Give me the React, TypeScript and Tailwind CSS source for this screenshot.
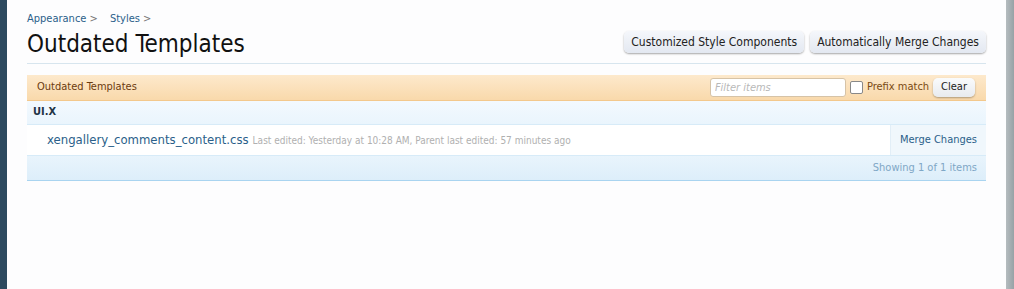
import React from 'react';

const font = { fontFamily: '"DejaVu Sans Condensed", "DejaVu Sans", sans-serif' };

export default function App() {
    return (
        <div className="flex h-[289px] w-full bg-[#fdfdfe]" style={font}>
            <div className="w-[7px] shrink-0 bg-[#2d4a5f]"></div>
            <div className="flex-1 px-5 pt-[11px]">
                <div className="flex gap-3 text-[11px] text-[#2b5f8a]">
                    <span>Appearance <span className="text-[#777]">&gt;</span></span>
                    <span>Styles <span className="text-[#777]">&gt;</span></span>
                </div>
                <div className="mt-[1.5px] flex items-end justify-between border-b border-[#d7e5ee] pb-[4px]">
                    <h1 className="text-[24px] leading-[30px] text-[#111]">Outdated Templates</h1>
                    <div className="mb-[6px] flex gap-[6px]">
                        <button className="h-[22px] rounded-[5px] bg-gradient-to-b from-[#f5f7fb] to-[#e3e8f1] px-[7px] text-[12px] text-[#222] shadow-[0_1px_2px_rgba(0,0,0,0.35)]">Customized Style Components</button>
                        <button className="h-[22px] rounded-[5px] bg-gradient-to-b from-[#f5f7fb] to-[#e3e8f1] px-[7px] text-[12px] text-[#222] shadow-[0_1px_2px_rgba(0,0,0,0.35)]">Automatically Merge Changes</button>
                    </div>
                </div>
                <div className="mt-[11px]">
                    <div className="flex h-[26px] items-center justify-between border-b border-[#f3c88c] bg-gradient-to-b from-[#fde9cc] to-[#f9d9ab] pl-[10px] pr-[11px]">
                        <span className="text-[11px] text-[#6b3b0f]">Outdated Templates</span>
                        <div className="flex items-center">
                            <input className="h-[19px] w-[136px] rounded-[3px] border border-[#d6c3a7] bg-white px-[4px] text-[11px] italic placeholder-[#b8b8b8] outline-none" placeholder="Filter items" />
                            <span className="ml-[4px] h-[13px] w-[13px] rounded-[2px] border border-[#888] bg-white"></span>
                            <span className="ml-[4px] text-[11px] text-[#7a4a13]">Prefix match</span>
                            <button className="ml-[4px] h-[19px] rounded-[5px] bg-gradient-to-b from-[#fafbfc] to-[#e8ebef] px-[8px] text-[11px] text-[#222] shadow-[0_1px_2px_rgba(0,0,0,0.3)]">Clear</button>
                        </div>
                    </div>
                    <div className="flex h-[24px] items-center border-b border-[#d7ebf8] bg-gradient-to-b from-[#f3f9fe] to-[#eaf5fd] pl-[6px] text-[11px] font-bold text-[#1e3345]">UI.X</div>
                    <div className="flex h-[31px] border-b border-[#d7ebf8] bg-white">
                        <div className="flex flex-1 items-center gap-[4px] pl-[20px]">
                            <span className="text-[13px] text-[#2b5f8a]">xengallery_comments_content.css</span>
                            <span className="text-[10px] text-[#b0b0b0]">Last edited: Yesterday at 10:28 AM, Parent last edited: 57 minutes ago</span>
                        </div>
                        <div className="flex w-[96px] items-center justify-end border-l border-[#e2eef7] bg-[#f0f7fc] pr-[9px] text-[11px] text-[#2b5f8a]">Merge Changes</div>
                    </div>
                    <div className="flex h-[25px] items-center justify-end border-b border-[#a9d4f0] bg-gradient-to-b from-[#e9f4fc] to-[#ddeefa] pr-[9px] text-[11px] text-[#7fa7c6]">Showing 1 of 1 items</div>
                </div>
            </div>
            <div className="w-[8px] shrink-0 bg-gradient-to-r from-[#b5bcbf] to-[#98a2a6]"></div>
        </div>
    );
}
